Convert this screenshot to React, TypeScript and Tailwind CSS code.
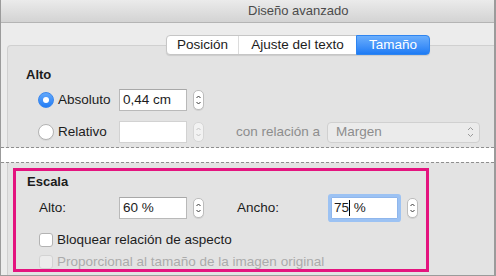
import React from 'react';

function Stepper({ disabled = false }: { disabled?: boolean }) {
  return (
    <div className={`w-[11px] h-[20px] rounded-[5px] border ${disabled ? 'border-[#d6d6d6] bg-[#f2f2f2]' : 'border-[#bdbdbd] bg-white shadow-[0_1px_0_rgba(0,0,0,0.08)]'} flex items-center justify-center`}>
      <svg width="9" height="18" viewBox="0 0 9 18" fill="none">
        <path d="M2.5 7 L4.5 5 L6.5 7" stroke={disabled ? '#c4c4c4' : '#3a3a3a'} strokeWidth="1" />
        <path d="M2.5 11 L4.5 13 L6.5 11" stroke={disabled ? '#c4c4c4' : '#3a3a3a'} strokeWidth="1" />
      </svg>
    </div>
  );
}

function Radio({ checked }: { checked?: boolean }) {
  if (checked) {
    return (
      <div className="w-[16px] h-[16px] rounded-full bg-gradient-to-b from-[#62a8fb] to-[#1f7cf4] border border-[#3a87ee] flex items-center justify-center">
        <div className="w-[6px] h-[6px] rounded-full bg-white" />
      </div>
    );
  }
  return <div className="w-[16px] h-[16px] rounded-full bg-white border border-[#b3b3b3] shadow-[0_1px_0_rgba(0,0,0,0.05)]" />;
}

export default function App() {
  return (
    <div className="w-[496px] h-[276px] flex flex-col bg-[#ececec] border-l border-r-2 border-b border-[#9b9b9b] overflow-hidden font-['Liberation_Sans',Arial,sans-serif] text-[13.5px] text-[#1c1c1c]">
      {/* title bar */}
      <div className="h-[23px] shrink-0 border-b border-[#b4b4b4] bg-gradient-to-b from-[#ebebeb] to-[#d3d3d3] pl-[247px] text-[13px] leading-[22px] text-[#4b4b4b]">
        Diseño avanzado
      </div>

      {/* upper section */}
      <div className="h-[125px] shrink-0 flex flex-col border-b border-dashed border-[#8e8e8e]">
        <div className="relative z-10 mt-[12px] ml-[165px] flex h-[20px] w-[264px] rounded-[4px] border border-[#c6c6c6] bg-white shadow-[0_1px_1px_rgba(0,0,0,0.1)] leading-[18px]">
          <div className="w-[72px] text-center border-r border-[#dcdcdc]">Posición</div>
          <div className="w-[117px] text-center">Ajuste del texto</div>
          <div className="flex-1 -my-px -mr-px rounded-r-[4px] bg-gradient-to-b from-[#6aaefc] to-[#1c7bf5] border border-[#2f85f0] text-center text-white leading-[18px]">Tamaño</div>
        </div>
        <div className="-mt-[10px] ml-[6px] flex-1 bg-[#e3e3e3] border-t border-l border-[#d0d0d0] rounded-tl-[4px] pt-[21px] pl-[18px]">
          <div className="font-bold text-[13px] leading-[16px]">Alto</div>
          <div className="mt-[6px] ml-[12px] flex items-center h-[22px]">
            <div className="w-[81px] flex items-center gap-[4px]">
              <Radio checked />
              <span>Absoluto</span>
            </div>
            <div className="w-[68px] h-[22px] bg-white border border-[#b9b9b9] border-t-[#a8a8a8] pl-[3px] leading-[20px]">0,44 cm</div>
            <div className="ml-[6px]"><Stepper /></div>
          </div>
          <div className="mt-[10px] ml-[12px] flex items-center h-[22px]">
            <div className="w-[81px] flex items-center gap-[4px]">
              <Radio />
              <span>Relativo</span>
            </div>
            <div className="w-[68px] h-[22px] bg-white border border-[#d2d2d2]" />
            <div className="ml-[6px]"><Stepper disabled /></div>
            <span className="ml-[32px] text-[#8d8d8d]">con relación a</span>
            <div className="ml-[7px] w-[153px] h-[21px] rounded-[4px] bg-[#ebebeb] border border-[#d0d0d0] flex items-center pl-[8px] pr-[4px] text-[#8d8d8d]">
              <span className="flex-1">Margen</span>
              <svg width="9" height="14" viewBox="0 0 9 14" fill="none">
                <path d="M2 5 L4.5 2.5 L7 5" stroke="#9a9a9a" strokeWidth="1" />
                <path d="M2 9 L4.5 11.5 L7 9" stroke="#9a9a9a" strokeWidth="1" />
              </svg>
            </div>
          </div>
        </div>
      </div>

      {/* gap */}
      <div className="h-[14px] shrink-0 bg-white" />

      {/* lower section */}
      <div className="flex-1 flex flex-col border-t border-dashed border-[#8e8e8e]">
        <div className="ml-[6px] flex-1 bg-[#e3e3e3] border-l border-[#d0d0d0] pt-[5px] pl-[5px]">
          <div className="w-[416px] h-[104px] border-[3px] border-[#e4147f] pt-[3px] pl-[11px]">
            <div className="font-bold text-[13px] leading-[16px]">Escala</div>
            <div className="mt-[7px] ml-[12px] flex items-center h-[22px]">
              <span className="w-[80px]">Alto:</span>
              <div className="w-[68px] h-[22px] bg-white border border-[#b9b9b9] border-t-[#a8a8a8] pl-[3px] leading-[20px]">60 %</div>
              <div className="ml-[6px]"><Stepper /></div>
              <span className="ml-[33px] w-[94px]">Ancho:</span>
              <div className="w-[67px] h-[22px] bg-white border border-[#8fb6ec] ring-[3px] ring-[#9cc2f3] rounded-[1px] pl-[2px] leading-[20px] flex items-center">
                <span>75</span>
                <span className="w-px h-[16px] bg-black" />
                <span className="whitespace-pre"> %</span>
              </div>
              <div className="ml-[9px]"><Stepper /></div>
            </div>
            <div className="mt-[13px] ml-[12px] flex items-center h-[16px] gap-[4px]">
              <div className="w-[14px] h-[14px] rounded-[3px] bg-white border border-[#b3b3b3]" />
              <span>Bloquear relación de aspecto</span>
            </div>
            <div className="mt-[6px] ml-[12px] flex items-center h-[16px] gap-[4px] text-[#ababab]">
              <div className="w-[14px] h-[14px] rounded-[3px] bg-[#ececec] border border-[#d3d3d3]" />
              <span>Proporcional al tamaño de la imagen original</span>
            </div>
          </div>
        </div>
      </div>
    </div>
  );
}
